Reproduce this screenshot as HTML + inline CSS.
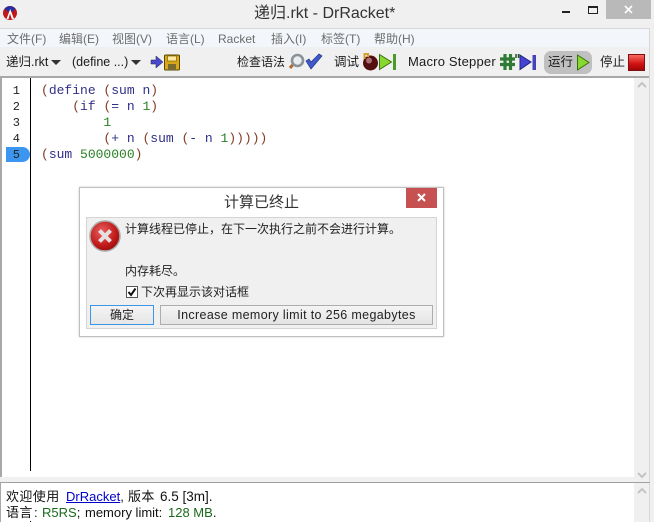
<!DOCTYPE html>
<html><head><meta charset="utf-8">
<style>
html,body{margin:0;padding:0}
body{width:654px;height:522px;overflow:hidden;position:relative;background:#f0f0f0;font-family:"Liberation Sans","Noto Sans CJK SC",sans-serif;font-size:13px;color:#1a1a1a}
.a{position:absolute;white-space:pre}
.t{position:absolute;white-space:pre;line-height:16px;height:16px}
.m{color:#6d6d6d;font-size:12px}
.c{position:absolute;white-space:pre;font:13px/16px "Liberation Mono",monospace;left:41px;color:#30308a}
.p{color:#843c24}.g{color:#298026}
.n{position:absolute;left:6px;width:14px;text-align:right;font:12px/16px "Liberation Mono",monospace;color:#222}
svg{position:absolute;overflow:visible}
</style></head><body>
<!-- frame -->
<div class="a" style="left:0;top:28px;width:650px;height:1px;background:#d8d8d8"></div>
<div class="a" style="left:0;top:29px;width:650px;height:18px;background:#f3f6fb"></div>
<div class="a" style="left:0;top:76px;width:650px;height:2px;background:#a8a8a8"></div>
<div class="a" style="left:1px;top:78px;width:633px;height:399px;background:#fff"></div>
<div class="a" style="left:0;top:76px;width:2px;height:401px;background:#a8a8a8"></div>
<div class="a" style="left:30px;top:78px;width:1px;height:393px;background:#000"></div>
<div class="a" style="left:634px;top:78px;width:15px;height:399px;background:#f0f0f0"></div>
<div class="a" style="left:649px;top:28px;width:1px;height:494px;background:#d8d8d8"></div>
<div class="a" style="left:0;top:482px;width:650px;height:1px;background:#a0a0a0"></div>
<div class="a" style="left:1px;top:483px;width:633px;height:39px;background:#fff"></div>
<div class="a" style="left:0;top:483px;width:1px;height:39px;background:#a8a8a8"></div>
<div class="a" style="left:634px;top:483px;width:15px;height:39px;background:#f0f0f0"></div>
<svg style="left:0;top:0" width="654" height="522" viewBox="0 0 654 522">
<g fill="none" stroke="#c4c4c4" stroke-width="2"><path d="M638 87l4-4 4 4M638 473l4 4 4-4M638 493l4-4 4 4"/></g>
</svg>
<!-- title bar -->
<svg style="left:3px;top:6px" width="14" height="14" viewBox="0 0 14 14"><circle cx="7" cy="7" r="7" fill="#c01818"/><path d="M1.500 2.800A7 7 0 0 1 12.500 2.800L10 5.500H4.500z" fill="#2030a0"/><path d="M3.500 13L7.200 3L11 13L8.800 13L7 7.500L5.500 13z" fill="#fff"/></svg>
<div class="t" style="left:254px;top:4px;font-size:16px;line-height:20px;height:20px;color:#333">递归.rkt - DrRacket*</div>
<div class="a" style="left:562px;top:11px;width:8px;height:2px;background:#222"></div>
<div class="a" style="left:588px;top:6px;width:8px;height:5px;border:1px solid #222;border-top-width:2px"></div>
<div class="a" style="left:606px;top:0;width:45px;height:19px;background:#b9b9b9"></div>
<svg style="left:606px;top:0" width="45" height="19"><path d="M19 6l7 7M26 6l-7 7" stroke="#fff" stroke-width="1.6"/></svg>
<!-- menu -->
<div class="t m" style="left:7px;top:31px">文件(F)</div>
<div class="t m" style="left:59px;top:31px">编辑(E)</div>
<div class="t m" style="left:112px;top:31px">视图(V)</div>
<div class="t m" style="left:166px;top:31px">语言(L)</div>
<div class="t m" style="left:218px;top:31px">Racket</div>
<div class="t m" style="left:271px;top:31px">插入(I)</div>
<div class="t m" style="left:321px;top:31px">标签(T)</div>
<div class="t m" style="left:374px;top:31px">帮助(H)</div>
<!-- toolbar -->
<div class="t" style="left:6px;top:54px;font-size:12.5px">递归.rkt</div>
<svg style="left:0;top:0" width="654" height="80"><path d="M51 60h10l-5 5zM131 60h10l-5 5z" fill="#333"/></svg>
<div class="t" style="left:72px;top:54px;font-size:12.5px">(define ...)</div>
<svg style="left:151px;top:54px" width="30" height="17" viewBox="0 0 30 17"><path d="M0 6h5V2l7 6-7 6v-4H0z" fill="#4a4ad0" stroke="#223" stroke-width=".5"/><rect x="13.500" y="1" width="15" height="15" rx="1" fill="#d8a818" stroke="#5a4800"/><rect x="16.500" y="2" width="9" height="5" fill="#fbe9a0" stroke="#806000" stroke-width=".7"/><rect x="17" y="10" width="8" height="6" fill="#7a6a30"/></svg>
<div class="t" style="left:237px;top:54px;font-size:12px">检查语法</div>
<svg style="left:289px;top:53px" width="33" height="18" viewBox="0 0 33 18"><circle cx="8.500" cy="7.500" r="5.500" fill="#e8eef0" stroke="#8a9298" stroke-width="2.600"/><path d="M3.500 12L1 15" stroke="#b06a30" stroke-width="3"/><path d="M17 8l5 8L33 3l-3-2-8 8-2-3z" fill="#4058c8" stroke="#223488" stroke-width=".7"/></svg>
<div class="t" style="left:334px;top:54px;font-size:12.5px">调试</div>
<svg style="left:362px;top:52px" width="35" height="19" viewBox="0 0 35 19"><circle cx="8.500" cy="11" r="7.500" fill="#541010"/><circle cx="7" cy="8.500" r="3" fill="#a87070"/><path d="M2.500 7V2h3.500v3" fill="none" stroke="#d8a030" stroke-width="2"/><path d="M17.500 2.500l12 7.500-12 7.500z" fill="#88d830" stroke="#3a7010"/><rect x="31" y="2" width="3" height="16" fill="#4c9a28"/></svg>
<div class="t" style="left:408px;top:54px;font-size:13px;letter-spacing:.2px">Macro Stepper</div>
<svg style="left:500px;top:53px" width="37" height="18" viewBox="0 0 37 18"><path d="M5 1v16M10.500 1v16M0 6h15M0 11.500h15" stroke="#2f7a34" stroke-width="3.200"/><path d="M16 1v4M18.500 1v4" stroke="#225522" stroke-width="1.500"/><path d="M20 2l11 7-11 7.500z" fill="#4444d0" stroke="#222288"/><rect x="32.500" y="2" width="3.500" height="15" fill="#4444bb"/></svg>
<div class="a" style="left:544px;top:51px;width:48px;height:23px;border-radius:7px;background:#c0c0c0"></div>
<div class="t" style="left:548px;top:54px;font-size:12.5px">运行</div>
<svg style="left:576px;top:54px" width="14" height="17" viewBox="0 0 14 17"><path d="M1.500 1l11.500 7.500-11.500 7.500z" fill="#88d830" stroke="#3a7010"/></svg>
<div class="t" style="left:600px;top:54px;font-size:12.5px">停止</div>
<div class="a" style="left:628px;top:54px;width:15px;height:15px;background:linear-gradient(#f86a60,#d01010 60%,#a00808);border:1px solid #801010"></div>
<!-- line numbers -->
<div class="a" style="left:6px;top:147px;width:24px;height:15px;background:#3c96f0;border-radius:0 8px 8px 0"></div>
<div class="n" style="top:83px">1</div>
<div class="n" style="top:99px">2</div>
<div class="n" style="top:115px">3</div>
<div class="n" style="top:131px">4</div>
<div class="n" style="top:147px">5</div>
<!-- code -->
<div class="c" style="top:83px"><span class="p">(</span>define <span class="p">(</span>sum n<span class="p">)</span></div>
<div class="c" style="top:99px">    <span class="p">(</span>if <span class="p">(</span>= n <span class="g">1</span><span class="p">)</span></div>
<div class="c" style="top:115px">        <span class="g">1</span></div>
<div class="c" style="top:131px">        <span class="p">(</span>+ n <span class="p">(</span>sum <span class="p">(</span>- n <span class="g">1</span><span class="p">)))))</span></div>
<div class="c" style="top:147px"><span class="p">(</span>sum <span class="g">5000000</span><span class="p">)</span></div>
<!-- dialog -->
<div class="a" style="left:79px;top:187px;width:363px;height:148px;background:#fff;border:1px solid #c0c0c0;box-shadow:0 0 2px #ccc"></div>
<div class="t" style="left:224px;top:193px;font-size:15px;line-height:20px;height:20px;color:#333">计算已终止</div>
<div class="a" style="left:406px;top:188px;width:31px;height:20px;background:#c75050"></div>
<svg style="left:406px;top:188px" width="31" height="20"><path d="M12 6l7 7M19 6l-7 7" stroke="#fff" stroke-width="2"/></svg>
<div class="a" style="left:86px;top:217px;width:349px;height:110px;background:#f0f0f0;border:1px solid #d4d4d4"></div>
<svg style="left:89px;top:220px" width="32" height="32" viewBox="0 0 32 32"><defs><radialGradient id="r" cx=".4" cy=".35" r=".8"><stop offset="0" stop-color="#e86060"/><stop offset=".6" stop-color="#c01818"/><stop offset="1" stop-color="#800808"/></radialGradient></defs><circle cx="16" cy="16" r="15" fill="url(#r)" stroke="#aaa" stroke-width="1.500"/><path d="M10.500 10.500l11 11M21.500 10.500l-11 11" stroke="#e8e0e0" stroke-width="4"/></svg>
<div class="t" style="left:125px;top:221px;font-size:12px;color:#222">计算线程已停止，在下一次执行之前不会进行计算。</div>
<div class="t" style="left:125px;top:263px;font-size:12px;color:#222">内存耗尽。</div>
<div class="a" style="left:126px;top:286px;width:10px;height:10px;border:1px solid #555;background:#fff"></div>
<svg style="left:126px;top:286px" width="12" height="12"><path d="M2.500 6l2.500 3 4.500-6.500" fill="none" stroke="#111" stroke-width="2"/></svg>
<div class="t" style="left:141px;top:284px;font-size:12px;color:#222">下次再显示该对话框</div>
<div class="a" style="left:90px;top:305px;width:62px;height:18px;background:linear-gradient(#f4f4f4,#e6e6e6);border:1px solid #3c96e8;text-align:center;line-height:18px;font-size:12px;color:#222">确定</div>
<div class="a" style="left:160px;top:305px;width:271px;height:18px;background:linear-gradient(#f4f4f4,#e4e4e4);border:1px solid #adadad;text-align:center;line-height:18px;font-size:12.5px;letter-spacing:.35px;color:#222">Increase memory limit to 256 megabytes</div>
<!-- status -->
<div class="t" style="left:6px;top:489px;font-size:13px;letter-spacing:.4px;color:#111">欢迎使用</div>
<div class="t" style="left:66px;top:489px;font-size:13px;color:#111"><span style="color:#00c;text-decoration:underline">DrRacket</span>,</div>
<div class="t" style="left:128px;top:489px;font-size:13px;letter-spacing:.4px;color:#111">版本</div>
<div class="t" style="left:160px;top:489px;font-size:13.500px;color:#111">6.5 [3m].</div>
<div class="t" style="left:6px;top:505px;font-size:13px;letter-spacing:.4px;color:#111">语言</div>
<div class="t" style="left:34px;top:505px;font-size:13px;color:#111">:</div>
<div class="t" style="left:42px;top:505px;font-size:13px;color:#111"><span style="color:#1a6a1a">R5RS</span>;</div>
<div class="t" style="left:85px;top:505px;font-size:13px;color:#111">memory limit:</div>
<div class="t" style="left:168px;top:505px;font-size:13px;color:#111"><span style="color:#1a6a1a">128 MB</span>.</div>
<div class="a" style="left:30px;top:521px;width:1px;height:1px;background:#000"></div>
</body></html>
